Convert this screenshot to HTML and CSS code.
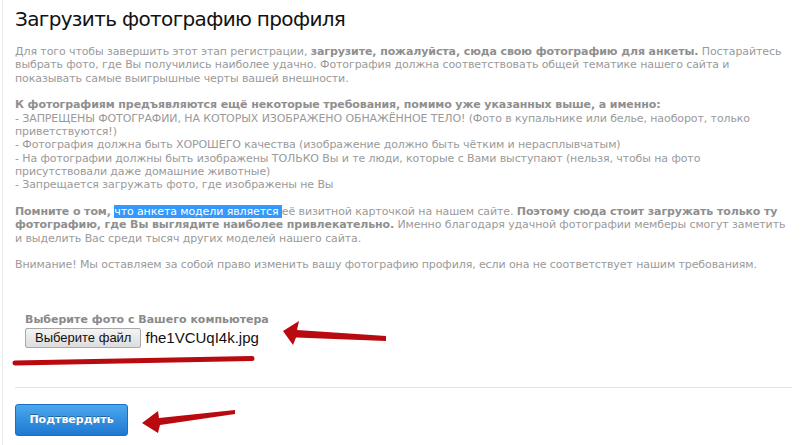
FILE: index.html
```html
<!DOCTYPE html>
<html lang="ru">
<head>
<meta charset="utf-8">
<title>Загрузить фотографию профиля</title>
<link rel="stylesheet" href="styles.css">
</head>
<body>
<div class="page">
  <h1 class="title">Загрузить фотографию профиля</h1>
  <div class="info">
    <p>Для того чтобы завершить этот этап регистрации, <b>загрузите, пожалуйста, сюда свою фотографию для анкеты.</b> Постарайтесь<br>выбрать фото, где Вы получились наиболее удачно. Фотография должна соответствовать общей тематике нашего сайта и<br>показывать самые выигрышные черты вашей внешности.</p>
    <p><b>К фотографиям предъявляются ещё некоторые требования, помимо уже указанных выше, а именно:</b><br>- ЗАПРЕЩЕНЫ ФОТОГРАФИИ, НА КОТОРЫХ ИЗОБРАЖЕНО ОБНАЖЁННОЕ ТЕЛО! (Фото в купальнике или белье, наоборот, только<br>приветствуются!)<br>- Фотография должна быть ХОРОШЕГО качества (изображение должно быть чётким и нерасплывчатым)<br>- На фотографии должны быть изображены ТОЛЬКО Вы и те люди, которые с Вами выступают (нельзя, чтобы на фото<br>присутствовали даже домашние животные)<br>- Запрещается загружать фото, где изображены не Вы</p>
    <p><b>Помните о том,</b> <span class="sel">что анкета модели является </span>её визитной карточкой на нашем сайте. <b>Поэтому сюда стоит загружать только ту<br>фотографию, где Вы выглядите наиболее привлекательно.</b> Именно благодаря удачной фотографии мемберы смогут заметить<br>и выделить Вас среди тысяч других моделей нашего сайта.</p>
    <p>Внимание! Мы оставляем за собой право изменить вашу фотографию профиля, если она не соответствует нашим требованиям.</p>
  </div>
  <div class="upload">
    <div class="upload-label">Выберите фото с Вашего компьютера</div>
    <div class="file-row">
      <span class="file-btn">Выберите файл</span>
      <span class="file-name">fhe1VCUqI4k.jpg</span>
    </div>
  </div>
  <div class="actions">
    <button class="submit" type="button">Подтвердить</button>
  </div>
  <svg class="marks" width="802" height="445" viewBox="0 0 802 445" aria-hidden="true">
    <path d="M15 363 L252 358.5" stroke="#b80a0f" stroke-width="5" stroke-linecap="round" fill="none"/>
    <path d="M283 331 L299 321 L297 330 L386 336 L386 341 L296 337.5 L293 345 Z" fill="#b80a0f"/>
    <path d="M142 423 L158 411 L159 418 L235 410 L235 414 L160 425 L158 433 Z" fill="#b80a0f"/>
  </svg>
</div>
</body>
</html>
```
FILE: styles.css
```css
html, body {
  margin: 0;
  padding: 0;
  background: #fff;
}
.page {
  position: relative;
  margin-left: 2px;
  border-left: 1px solid #ebebeb;
  padding: 8px 10px 0 12px;
  height: 437px;
  font-family: "DejaVu Sans", Verdana, sans-serif;
}
.title {
  margin: 0;
  font-size: 20px;
  font-weight: normal;
  letter-spacing: -0.65px;
  line-height: 23px;
  color: #111;
}
.info {
  margin-top: 14px;
  font-size: 11px;
  line-height: 13.33px;
  letter-spacing: -0.1px;
  color: #9a9a9a;
  white-space: nowrap;
}
.info p {
  margin: 0 0 13.33px;
}
.info b {
  color: #8f8f8f;
}
.sel {
  background: #3399ff;
  color: #fff;
}
.upload {
  padding: 28px 10px 0;
}
.upload-label {
  font-size: 11px;
  font-weight: bold;
  color: #8a8a8a;
  line-height: 14px;
}
.file-row {
  display: flex;
  align-items: center;
  gap: 4px;
  margin-top: 1px;
}
.file-btn {
  font-family: "Liberation Sans", Arial, sans-serif;
  font-size: 13px;
  color: #111;
  height: 18px;
  line-height: 18px;
  padding: 0 9px;
  border: 1px solid #a9a9a9;
  border-radius: 2px;
  background: linear-gradient(#f4f4f4, #dddddd);
}
.file-name {
  font-family: "Liberation Sans", Arial, sans-serif;
  font-size: 15px;
  color: #111;
}
.actions {
  margin-top: 39px;
  border-top: 1px solid #e4e4e4;
  padding-top: 16px;
}
.submit {
  display: block;
  width: 113px;
  height: 32px;
  border: 1px solid #1c6fc0;
  border-radius: 3px;
  background: linear-gradient(#4aa8ee, #1f78d1);
  color: #fff;
  font-family: "DejaVu Sans", Verdana, sans-serif;
  font-size: 11px;
  font-weight: bold;
  text-shadow: 0 -1px 0 rgba(0, 0, 0, 0.35);
  padding: 0;
}
.marks {
  position: absolute;
  left: -3px;
  top: 0;
  pointer-events: none;
}
```
